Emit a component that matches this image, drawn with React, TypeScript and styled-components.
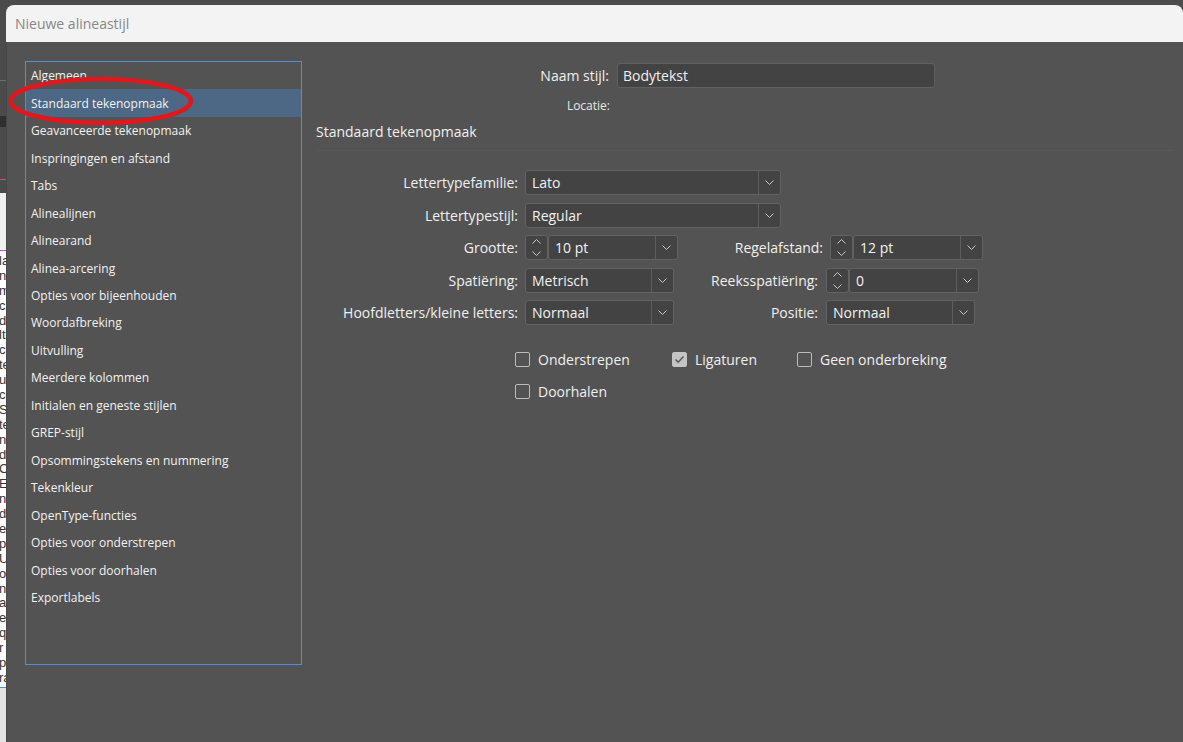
import React from "react";
import styled, { createGlobalStyle } from "styled-components";

const GlobalStyle = createGlobalStyle`
  html, body {
    margin: 0;
    padding: 0;
    background: #4b4b4b;
  }
  body {
    font-family: "Open Sans", "Noto Sans", sans-serif;
  }
  * {
    box-sizing: border-box;
  }
`;

const categories = [
  "Algemeen",
  "Standaard tekenopmaak",
  "Geavanceerde tekenopmaak",
  "Inspringingen en afstand",
  "Tabs",
  "Alinealijnen",
  "Alinearand",
  "Alinea-arcering",
  "Opties voor bijeenhouden",
  "Woordafbreking",
  "Uitvulling",
  "Meerdere kolommen",
  "Initialen en geneste stijlen",
  "GREP-stijl",
  "Opsommingstekens en nummering",
  "Tekenkleur",
  "OpenType-functies",
  "Opties voor onderstrepen",
  "Opties voor doorhalen",
  "Exportlabels",
];

// bits of the document that peek out left of the dialog
const docFragments = [
  "la", "n", "m", "ci", "d", "lt", "cc", "te", "u", "cc", "S", "te", "n",
  "d", "C", "E", "n", "d", "e", "p", "U", "o", "n", "a", "e", "q", "r", "p", "ra",
];

const Chevron = ({ up }: { up?: boolean }) => (
  <svg width="9" height="5" viewBox="0 0 9 5">
    <path
      d={up ? "M0.5 4.5 L4.5 0.5 L8.5 4.5" : "M0.5 0.5 L4.5 4.5 L8.5 0.5"}
      fill="none"
      stroke="#c9c9c9"
      strokeWidth="1"
    />
  </svg>
);

const Select = ({ value, width }: { value: string; width: number }) => (
  <Combo $w={width}>
    <ComboValue>{value}</ComboValue>
    <ComboArrow>
      <Chevron />
    </ComboArrow>
  </Combo>
);

const SpinCombo = ({ value }: { value: string }) => (
  <SpinWrap>
    <Spinner>
      <Chevron up />
      <Chevron />
    </Spinner>
    <Select value={value} width={130} />
  </SpinWrap>
);

const Check = ({ label, checked }: { label: string; checked?: boolean }) => (
  <CheckItem>
    <CheckBox $checked={checked}>
      {checked && (
        <svg width="11" height="9" viewBox="0 0 11 9">
          <path d="M1.5 4.5 L4.2 7.2 L9.5 1.5" fill="none" stroke="#5a5a5a" strokeWidth="1.6" />
        </svg>
      )}
    </CheckBox>
    <span>{label}</span>
  </CheckItem>
);

const App = () => {
  return (
    <>
      <GlobalStyle />
      <Page>
        <Backdrop>
          <Band $h={80} $bg="#4b4b4b" />
          <Band $h={1} $bg="#6c6c6c" />
          <Band $h={35} $bg="#4b4b4b" />
          <Band $h={11} $bg="#2e2e2e" />
          <Band $h={52} $bg="#4b4b4b" />
          <Band $h={1} $bg="#c8507c" />
          <Band $h={13} $bg="#4b4b4b" />
          <Band $h={57} $bg="#efefef" />
          <Band $h={1} $bg="#c64fd0" />
          <DocText>
            {docFragments.map((f, i) => (
              <DocLine key={i}>{f}</DocLine>
            ))}
          </DocText>
          <Band $h={1} $bg="#4a90d9" />
          <Band $h={60} $bg="#e4e4e4" />
        </Backdrop>

        <Dialog>
          <TitleBar>Nieuwe alineastijl</TitleBar>
          <Body>
            <CategoryList>
              {categories.map((c, i) => (
                <CategoryItem key={c} $active={i === 1}>
                  {c}
                </CategoryItem>
              ))}
            </CategoryList>

            <Panel>
              <NameRow>
                <NameLabel>Naam stijl:</NameLabel>
                <TextInput>Bodytekst</TextInput>
              </NameRow>
              <LocationRow>
                <LocationLabel>Locatie:</LocationLabel>
              </LocationRow>
              <SectionTitle>Standaard tekenopmaak</SectionTitle>
              <Divider />

              <Form>
                <FormRow>
                  <FieldLabel $w={209}>Lettertypefamilie:</FieldLabel>
                  <Select value="Lato" width={256} />
                </FormRow>
                <FormRow>
                  <FieldLabel $w={209}>Lettertypestijl:</FieldLabel>
                  <Select value="Regular" width={256} />
                </FormRow>
                <FormRow>
                  <LeftHalf>
                    <FieldLabel $w={209}>Grootte:</FieldLabel>
                    <SpinCombo value="10 pt" />
                  </LeftHalf>
                  <FieldLabel $w={153}>Regelafstand:</FieldLabel>
                  <SpinCombo value="12 pt" />
                </FormRow>
                <FormRow>
                  <LeftHalf>
                    <FieldLabel $w={209}>Spatiëring:</FieldLabel>
                    <Select value="Metrisch" width={149} />
                  </LeftHalf>
                  <FieldLabel $w={149} $gap={8}>Reeksspatiëring:</FieldLabel>
                  <SpinCombo value="0" />
                </FormRow>
                <FormRow>
                  <LeftHalf>
                    <FieldLabel $w={209}>Hoofdletters/kleine letters:</FieldLabel>
                    <Select value="Normaal" width={149} />
                  </LeftHalf>
                  <FieldLabel $w={149} $gap={8}>Positie:</FieldLabel>
                  <Select value="Normaal" width={149} />
                </FormRow>
              </Form>

              <CheckGrid>
                <Check label="Onderstrepen" />
                <Check label="Ligaturen" checked />
                <Check label="Geen onderbreking" />
                <Check label="Doorhalen" />
              </CheckGrid>
            </Panel>
          </Body>
        </Dialog>

        <Annotation width="1183" height="742" viewBox="0 0 1183 742">
          <ellipse cx="101" cy="101" rx="90" ry="22" fill="none" stroke="#e2171c" strokeWidth="4.5" />
        </Annotation>
      </Page>
    </>
  );
};

const Page = styled.div`
  position: relative;
  display: flex;
  width: 1183px;
  height: 742px;
  overflow: hidden;
  background: #4b4b4b;
`;

const Backdrop = styled.div`
  width: 6px;
  flex-shrink: 0;
  display: flex;
  flex-direction: column;
  overflow: hidden;
`;

const Band = styled.div<{ $h: number; $bg: string }>`
  height: ${(p) => p.$h}px;
  flex-shrink: 0;
  background: ${(p) => p.$bg};
`;

const DocText = styled.div`
  height: 436px;
  flex-shrink: 0;
  background: #ffffff;
  padding-top: 3px;
  overflow: hidden;
`;

const DocLine = styled.div`
  height: 14.9px;
  margin-left: -1px;
  font-family: "Liberation Sans", Arial, sans-serif;
  font-size: 13px;
  line-height: 14.9px;
  color: #333;
  white-space: nowrap;
`;

const Dialog = styled.div`
  flex: 1;
  margin-top: 5px;
  display: flex;
  flex-direction: column;
  border-radius: 8px 8px 0 0;
  overflow: hidden;
  background: #535353;
`;

const TitleBar = styled.div`
  height: 37px;
  flex-shrink: 0;
  display: flex;
  align-items: center;
  padding-left: 9px;
  background: #f3f3f3;
  color: #878787;
  font-size: 14px;
`;

const Body = styled.div`
  flex: 1;
  display: flex;
  align-items: flex-start;
  gap: 14px;
  padding: 19px 0 0 18px;
  border-left: 1px solid #474747;
`;

const CategoryList = styled.div`
  width: 277px;
  height: 604px;
  flex-shrink: 0;
  border: 1px solid #4f90d8;
`;

const CategoryItem = styled.div<{ $active?: boolean }>`
  height: 27.47px;
  display: flex;
  align-items: center;
  padding-left: 5px;
  font-size: 12px;
  color: #f2f2f2;
  background: ${(p) => (p.$active ? "#4c6884" : "transparent")};
`;

const Panel = styled.div`
  flex: 1;
  display: flex;
  flex-direction: column;
  padding-top: 1px;
  color: #f0f0f0;
`;

const NameRow = styled.div`
  display: flex;
  align-items: center;
  height: 26px;
`;

const NameLabel = styled.div`
  width: 294px;
  text-align: right;
  font-size: 14px;
  padding-right: 1px;
`;

const TextInput = styled.div`
  margin-left: 7px;
  width: 318px;
  height: 25px;
  display: flex;
  align-items: center;
  padding-left: 5px;
  font-size: 14px;
  background: #434343;
  border: 1px solid #606060;
  border-radius: 3px;
`;

const LocationRow = styled.div`
  display: flex;
  height: 18px;
  margin-top: 8px;
  align-items: center;
`;

const LocationLabel = styled.div`
  width: 294px;
  text-align: right;
  font-size: 12px;
  color: #e6e6e6;
`;

const SectionTitle = styled.div`
  height: 20px;
  margin-top: 7px;
  display: flex;
  align-items: center;
  font-size: 14px;
`;

const Divider = styled.div`
  height: 1px;
  margin-top: 9px;
  margin-right: 10px;
  background: #585858;
`;

const Form = styled.div`
  display: flex;
  flex-direction: column;
  gap: 7.5px;
  margin-top: 19px;
`;

const FormRow = styled.div`
  display: flex;
  align-items: center;
  height: 25px;
`;

const LeftHalf = styled.div`
  width: 361px;
  display: flex;
  align-items: center;
`;

const FieldLabel = styled.div<{ $w: number; $gap?: number }>`
  width: ${(p) => p.$w}px;
  flex-shrink: 0;
  padding-right: ${(p) => p.$gap ?? 7}px;
  text-align: right;
  font-size: 14px;
  white-space: nowrap;
`;

const Combo = styled.div<{ $w: number }>`
  width: ${(p) => p.$w}px;
  height: 25px;
  display: flex;
  background: #434343;
  border: 1px solid #626262;
  border-radius: 3px;
`;

const ComboValue = styled.div`
  flex: 1;
  display: flex;
  align-items: center;
  padding-left: 6px;
  font-size: 14px;
  color: #f2f2f2;
`;

const ComboArrow = styled.div`
  width: 22px;
  display: flex;
  align-items: center;
  justify-content: center;
  border-left: 1px solid #5e5e5e;
`;

const SpinWrap = styled.div`
  display: flex;
`;

const Spinner = styled.div`
  width: 23px;
  height: 25px;
  display: flex;
  flex-direction: column;
  align-items: center;
  justify-content: center;
  gap: 7px;
  background: #434343;
  border: 1px solid #626262;
  border-radius: 3px;
`;

const CheckGrid = styled.div`
  display: grid;
  grid-template-columns: 157px 125px auto;
  row-gap: 14px;
  margin-top: 25px;
  margin-left: 199px;
`;

const CheckItem = styled.label`
  display: flex;
  align-items: center;
  gap: 8px;
  height: 18px;
  font-size: 14px;
  color: #f0f0f0;
`;

const CheckBox = styled.span<{ $checked?: boolean }>`
  width: 15px;
  height: 15px;
  display: flex;
  align-items: center;
  justify-content: center;
  border: 1px solid ${(p) => (p.$checked ? "#c4c4c4" : "#bcbcbc")};
  border-radius: 2px;
  background: ${(p) => (p.$checked ? "#c4c4c4" : "transparent")};
`;

const Annotation = styled.svg`
  position: absolute;
  left: 0;
  top: 0;
  pointer-events: none;
`;

export default App;
